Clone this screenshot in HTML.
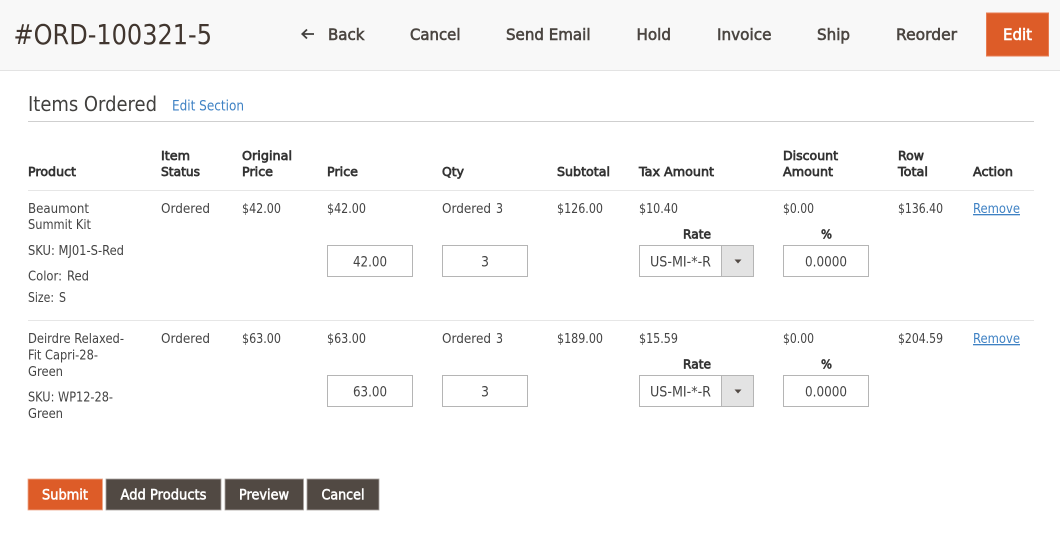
<!DOCTYPE html>
<html lang="en">
<head>
<meta charset="utf-8">
<title>#ORD-100321-5</title>
<style>
html,body{margin:0;padding:0;background:#fff;width:1060px;height:536px;overflow:hidden}
svg{display:block;filter:blur(.25px)}
text{font-family:"DejaVu Sans","Liberation Sans",sans-serif;font-size:13.2px;fill:#41403e}
.nav{font-size:16.2px;fill:#4a4540;stroke:#4a4540;stroke-width:.6px}
.th{font-size:12.8px;fill:#333;stroke:#333;stroke-width:.7px}
.b{font-size:13.2px;fill:#444}
.in{font-size:14.2px;fill:#444}
.btn{font-size:14.2px;fill:#fff;stroke:#fff;stroke-width:.55px}
</style>
</head>
<body>
<svg width="1060" height="536" viewBox="0 0 1060 536" xmlns="http://www.w3.org/2000/svg">
<rect width="1060" height="536" fill="#fff"/>
<rect width="1060" height="70" fill="#f8f8f8"/>
<rect y="70" width="1060" height="1" fill="#e3e3e3"/>

<text x="13.5" y="44" textLength="198.500" lengthAdjust="spacingAndGlyphs" style="font-size:27.500px;fill:#41362f">#ORD-100321-5</text>
<path d="M314 34H302.500M307 29.500L302.300 34L307 38.500" fill="none" stroke="#41403e" stroke-width="1.800"/>
<text class="nav" x="328" y="40" textLength="36.500" lengthAdjust="spacingAndGlyphs">Back</text>
<text class="nav" x="410" y="40" textLength="50.500" lengthAdjust="spacingAndGlyphs">Cancel</text>
<text class="nav" x="506" y="40" textLength="84.500" lengthAdjust="spacingAndGlyphs">Send Email</text>
<text class="nav" x="636.500" y="40" textLength="34.500" lengthAdjust="spacingAndGlyphs">Hold</text>
<text class="nav" x="717" y="40" textLength="54.500" lengthAdjust="spacingAndGlyphs">Invoice</text>
<text class="nav" x="817" y="40" textLength="33" lengthAdjust="spacingAndGlyphs">Ship</text>
<text class="nav" x="896" y="40" textLength="61" lengthAdjust="spacingAndGlyphs">Reorder</text>
<rect x="986.500" y="13" width="62" height="43" fill="#dd5c28" stroke="#e87d52" stroke-width="1"/>
<text class="nav" x="1003" y="40" textLength="29" lengthAdjust="spacingAndGlyphs" style="fill:#fff;stroke:#fff">Edit</text>

<text x="28" y="111" textLength="129" lengthAdjust="spacingAndGlyphs" style="font-size:20.200px;fill:#41403e">Items Ordered</text>
<text x="172" y="110.500" textLength="72" lengthAdjust="spacingAndGlyphs" style="font-size:14.200px;fill:#3f82c4">Edit Section</text>
<rect x="28" y="121" width="1006" height="1" fill="#cfcfcf"/>

<text class="th" x="28" y="176" textLength="48" lengthAdjust="spacingAndGlyphs">Product</text>
<text class="th" x="161" y="160" textLength="29" lengthAdjust="spacingAndGlyphs">Item</text>
<text class="th" x="161" y="176" textLength="39" lengthAdjust="spacingAndGlyphs">Status</text>
<text class="th" x="242" y="160" textLength="50" lengthAdjust="spacingAndGlyphs">Original</text>
<text class="th" x="242" y="176" textLength="31" lengthAdjust="spacingAndGlyphs">Price</text>
<text class="th" x="327" y="176" textLength="31" lengthAdjust="spacingAndGlyphs">Price</text>
<text class="th" x="442" y="176" textLength="22" lengthAdjust="spacingAndGlyphs">Qty</text>
<text class="th" x="557" y="176" textLength="53" lengthAdjust="spacingAndGlyphs">Subtotal</text>
<text class="th" x="639" y="176" textLength="75" lengthAdjust="spacingAndGlyphs">Tax Amount</text>
<text class="th" x="783" y="160" textLength="55" lengthAdjust="spacingAndGlyphs">Discount</text>
<text class="th" x="783" y="176" textLength="50" lengthAdjust="spacingAndGlyphs">Amount</text>
<text class="th" x="898" y="160" textLength="26" lengthAdjust="spacingAndGlyphs">Row</text>
<text class="th" x="898" y="176" textLength="30" lengthAdjust="spacingAndGlyphs">Total</text>
<text class="th" x="973" y="176" textLength="40" lengthAdjust="spacingAndGlyphs">Action</text>
<rect x="28" y="190" width="1006" height="1" fill="#e6e6e6"/>

<!-- row 1 -->
<text class="b" x="28" y="213" textLength="61" lengthAdjust="spacingAndGlyphs">Beaumont</text>
<text class="b" x="28" y="229" textLength="63" lengthAdjust="spacingAndGlyphs">Summit Kit</text>
<text class="b" x="28" y="255" textLength="96" lengthAdjust="spacingAndGlyphs">SKU: MJ01-S-Red</text>
<text class="b" x="28" y="280.500" textLength="34" lengthAdjust="spacingAndGlyphs">Color:</text>
<text class="b" x="67" y="280.500" textLength="22" lengthAdjust="spacingAndGlyphs">Red</text>
<text class="b" x="28" y="302" textLength="26" lengthAdjust="spacingAndGlyphs">Size:</text>
<text class="b" x="59" y="302" textLength="7" lengthAdjust="spacingAndGlyphs">S</text>
<text class="b" x="161" y="213" textLength="49" lengthAdjust="spacingAndGlyphs">Ordered</text>
<text class="b" x="242" y="213" textLength="39" lengthAdjust="spacingAndGlyphs">$42.00</text>
<text class="b" x="327" y="213" textLength="39" lengthAdjust="spacingAndGlyphs">$42.00</text>
<text class="b" x="442" y="213" textLength="49" lengthAdjust="spacingAndGlyphs">Ordered</text>
<text class="b" x="496" y="213" textLength="7" lengthAdjust="spacingAndGlyphs">3</text>
<text class="b" x="557" y="213" textLength="46" lengthAdjust="spacingAndGlyphs">$126.00</text>
<text class="b" x="639" y="213" textLength="39" lengthAdjust="spacingAndGlyphs">$10.40</text>
<text class="b" x="783" y="213" textLength="31" lengthAdjust="spacingAndGlyphs">$0.00</text>
<text class="b" x="898" y="213" textLength="45" lengthAdjust="spacingAndGlyphs">$136.40</text>
<text class="b" x="973" y="213" textLength="47" lengthAdjust="spacingAndGlyphs" text-decoration="underline" style="fill:#3f82c4">Remove</text>
<rect x="327.500" y="245.500" width="85" height="31" fill="#fff" stroke="#b5b5b5"/>
<text class="in" x="353" y="266.500" textLength="34" lengthAdjust="spacingAndGlyphs">42.00</text>
<rect x="442.500" y="245.500" width="85" height="31" fill="#fff" stroke="#b5b5b5"/>
<text class="in" x="481" y="266.500" textLength="8" lengthAdjust="spacingAndGlyphs">3</text>
<text class="th" x="683" y="238.500" textLength="28" lengthAdjust="spacingAndGlyphs">Rate</text>
<rect x="639.500" y="245.500" width="114" height="31" fill="#fff" stroke="#b5b5b5"/>
<rect x="722" y="246" width="31" height="30" fill="#e3e3e3"/>
<rect x="721" y="246" width="1" height="30" fill="#b5b5b5"/>
<text class="in" x="650" y="266.500" textLength="61" lengthAdjust="spacingAndGlyphs">US-MI-*-R</text>
<path d="M734.500 259.500h7l-3.500 4z" fill="#514943"/>
<text class="th" x="821" y="238.500" textLength="11" lengthAdjust="spacingAndGlyphs">%</text>
<rect x="783.500" y="245.500" width="85" height="31" fill="#fff" stroke="#b5b5b5"/>
<text class="in" x="805" y="266.500" textLength="42" lengthAdjust="spacingAndGlyphs">0.0000</text>
<rect x="28" y="320" width="1006" height="1" fill="#e6e6e6"/>

<!-- row 2 -->
<text class="b" x="28" y="343" textLength="96" lengthAdjust="spacingAndGlyphs">Deirdre Relaxed-</text>
<text class="b" x="28" y="359.500" textLength="70" lengthAdjust="spacingAndGlyphs">Fit Capri-28-</text>
<text class="b" x="28" y="376" textLength="35" lengthAdjust="spacingAndGlyphs">Green</text>
<text class="b" x="28" y="401.500" textLength="85" lengthAdjust="spacingAndGlyphs">SKU: WP12-28-</text>
<text class="b" x="28" y="418" textLength="35" lengthAdjust="spacingAndGlyphs">Green</text>
<text class="b" x="161" y="343" textLength="49" lengthAdjust="spacingAndGlyphs">Ordered</text>
<text class="b" x="242" y="343" textLength="39" lengthAdjust="spacingAndGlyphs">$63.00</text>
<text class="b" x="327" y="343" textLength="39" lengthAdjust="spacingAndGlyphs">$63.00</text>
<text class="b" x="442" y="343" textLength="49" lengthAdjust="spacingAndGlyphs">Ordered</text>
<text class="b" x="496" y="343" textLength="7" lengthAdjust="spacingAndGlyphs">3</text>
<text class="b" x="557" y="343" textLength="46" lengthAdjust="spacingAndGlyphs">$189.00</text>
<text class="b" x="639" y="343" textLength="39" lengthAdjust="spacingAndGlyphs">$15.59</text>
<text class="b" x="783" y="343" textLength="31" lengthAdjust="spacingAndGlyphs">$0.00</text>
<text class="b" x="898" y="343" textLength="45" lengthAdjust="spacingAndGlyphs">$204.59</text>
<text class="b" x="973" y="343" textLength="47" lengthAdjust="spacingAndGlyphs" text-decoration="underline" style="fill:#3f82c4">Remove</text>
<rect x="327.500" y="375.500" width="85" height="31" fill="#fff" stroke="#b5b5b5"/>
<text class="in" x="353" y="396.500" textLength="34" lengthAdjust="spacingAndGlyphs">63.00</text>
<rect x="442.500" y="375.500" width="85" height="31" fill="#fff" stroke="#b5b5b5"/>
<text class="in" x="481" y="396.500" textLength="8" lengthAdjust="spacingAndGlyphs">3</text>
<text class="th" x="683" y="368.500" textLength="28" lengthAdjust="spacingAndGlyphs">Rate</text>
<rect x="639.500" y="375.500" width="114" height="31" fill="#fff" stroke="#b5b5b5"/>
<rect x="722" y="376" width="31" height="30" fill="#e3e3e3"/>
<rect x="721" y="376" width="1" height="30" fill="#b5b5b5"/>
<text class="in" x="650" y="396.500" textLength="61" lengthAdjust="spacingAndGlyphs">US-MI-*-R</text>
<path d="M734.500 389.500h7l-3.500 4z" fill="#514943"/>
<text class="th" x="821" y="368.500" textLength="11" lengthAdjust="spacingAndGlyphs">%</text>
<rect x="783.500" y="375.500" width="85" height="31" fill="#fff" stroke="#b5b5b5"/>
<text class="in" x="805" y="396.500" textLength="42" lengthAdjust="spacingAndGlyphs">0.0000</text>

<!-- buttons -->
<rect x="28" y="479" width="74.500" height="31" fill="#dd5c28" stroke="#eda98c" stroke-width="0.800"/>
<text class="btn" x="42" y="499.500" textLength="46" lengthAdjust="spacingAndGlyphs">Submit</text>
<rect x="106" y="479" width="115" height="31" fill="#514943" stroke="#a8a39f" stroke-width="0.800"/>
<text class="btn" x="120.500" y="499.500" textLength="86" lengthAdjust="spacingAndGlyphs">Add Products</text>
<rect x="225" y="479" width="78.500" height="31" fill="#514943" stroke="#a8a39f" stroke-width="0.800"/>
<text class="btn" x="239" y="499.500" textLength="50" lengthAdjust="spacingAndGlyphs">Preview</text>
<rect x="307" y="479" width="72" height="31" fill="#514943" stroke="#a8a39f" stroke-width="0.800"/>
<text class="btn" x="321.500" y="499.500" textLength="43" lengthAdjust="spacingAndGlyphs">Cancel</text>
</svg>
</body>
</html>
